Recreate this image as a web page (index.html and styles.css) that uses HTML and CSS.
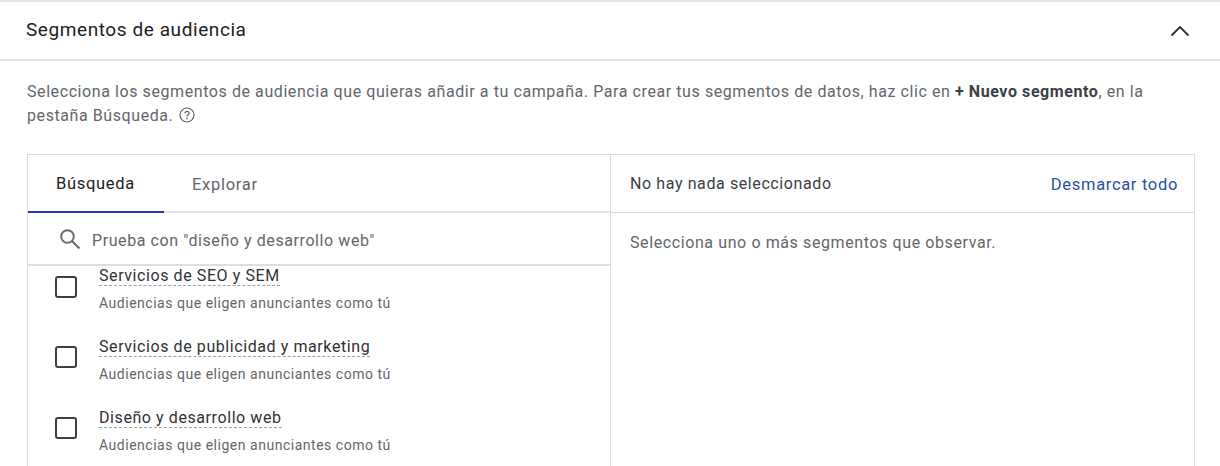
FILE: index.html
```html
<!DOCTYPE html>
<html lang="es">
<head>
  <meta charset="UTF-8" />
  <title>Segmentos de audiencia</title>
  <link rel="stylesheet" href="styles.css">
</head>
<body>
  <section class="panel">
    <header class="panel-head">
      <h2>Segmentos de audiencia</h2>
      <svg class="chevron" width="20" height="12" viewBox="0 0 20 12"><path d="M1.5 10.5 10 2l8.5 8.5" fill="none" stroke="#2b2d30" stroke-width="1.8"/></svg>
    </header>

    <p class="intro">Selecciona los segmentos de audiencia que quieras añadir a tu campaña. Para crear tus segmentos de datos, haz clic en <b>+ Nuevo segmento</b>, en la pestaña Búsqueda.
      <svg class="help" width="16" height="16" viewBox="0 0 16 16"><circle cx="8" cy="8" r="7" fill="none" stroke="#5f6368" stroke-width="1.2"/><path d="M5.9 6.3C5.9 5.1 6.8 4.3 8 4.3s2.1.8 2.1 1.9c0 1.5-2.1 1.6-2.1 3.2" fill="none" stroke="#5f6368" stroke-width="1.2"/><circle cx="8" cy="11.4" r=".8" fill="#5f6368"/></svg>
    </p>

    <div class="picker">
      <div class="col-left">
        <div class="tabs">
          <span class="tab active">Búsqueda</span>
          <span class="tab">Explorar</span>
        </div>
        <div class="search">
          <svg width="24" height="24" viewBox="0 0 24 24"><circle cx="9.5" cy="9.5" r="6.3" fill="none" stroke="#6b6f73" stroke-width="2"/><path d="m14 14 7.5 7.5" stroke="#6b6f73" stroke-width="2.2" fill="none"/></svg>
          <span>Prueba con "diseño y desarrollo web"</span>
        </div>
        <ul class="results">
          <li>
            <span class="check"></span>
            <div><span class="name">Servicios de SEO y SEM</span><small>Audiencias que eligen anunciantes como tú</small></div>
          </li>
          <li>
            <span class="check"></span>
            <div><span class="name">Servicios de publicidad y marketing</span><small>Audiencias que eligen anunciantes como tú</small></div>
          </li>
          <li>
            <span class="check"></span>
            <div><span class="name">Diseño y desarrollo web</span><small>Audiencias que eligen anunciantes como tú</small></div>
          </li>
        </ul>
      </div>
      <div class="col-right">
        <div class="selected-head">
          <span>No hay nada seleccionado</span>
          <a href="#">Desmarcar todo</a>
        </div>
        <p class="empty">Selecciona uno o más segmentos que observar.</p>
      </div>
    </div>
  </section>
</body>
</html>
```

FILE: styles.css
```css
*{box-sizing:border-box;margin:0;padding:0}
html,body{height:466px;overflow:hidden}
body{background:#fff;font-family:Roboto,Arial,sans-serif;color:#63666a}

.panel{border-top:2px solid #e3e4e6}
.panel-head{
  height:59px;
  padding:0 30px 2px 26px;
  display:flex;
  align-items:center;
  justify-content:space-between;
  border-bottom:2px solid #e3e4e6;
}
.chevron{margin-top:2px}
h2{font-size:19px;font-weight:400;color:#202124;letter-spacing:.58px}

.intro{
  padding:19px 26px 0 27px;
  font-size:16px;
  line-height:24px;
  letter-spacing:.58px;
  height:93px;
}
.intro b{font-weight:700;color:#3c4043}
.help{vertical-align:-2px;margin-left:1px}

.picker{
  margin:0 25px 0 27px;
  height:330px;
  border:1px solid #d9dadc;
  display:flex;
}
.col-left{width:583px;border-right:1px solid #d9dadc}
.col-right{flex:1}

.tabs{height:58px;display:flex;border-bottom:2px solid #e3e4e6}
.tab{
  height:58px;
  padding:0 28px;
  display:flex;
  align-items:center;
  font-size:16.5px;
  letter-spacing:.7px;
}
.tab.active{color:#202124;border-bottom:2px solid #1a3fb0;width:136px}

.search{
  height:53px;
  display:flex;
  align-items:center;
  gap:10px;
  padding:0 0 0 30px;
  font-size:16px;
  letter-spacing:.58px;
  border-bottom:2px solid #dcdde0;
}
.search span{padding-top:4px}
.results{list-style:none;height:200px;overflow:hidden}
.results li{
  height:71px;
  display:flex;
  align-items:flex-start;
  gap:22px;
  padding-left:27px;
}
.check{
  width:22px;
  height:22px;
  margin-top:9px;
  border:2px solid #3c4043;
  border-radius:3px;
  flex:none;
}
.results li:first-child .check{margin-top:10px}
.name{
  display:block;
  width:max-content;
  font-size:16px;
  line-height:19px;
  letter-spacing:.58px;
  color:#303134;
  border-bottom:1px dashed #9aa0a6;
}
small{display:block;margin-top:9px;font-size:14px;letter-spacing:.52px;line-height:16px}

.selected-head{
  height:58px;
  display:flex;
  align-items:center;
  justify-content:space-between;
  padding:0 16px 0 19px;
  font-size:16px;
  letter-spacing:.6px;
  color:#3c4043;
  border-bottom:1px solid #d9dadc;
}
a{color:#2a4fa3;text-decoration:none;font-size:16.5px;letter-spacing:.68px;padding-top:1px}
.empty{padding:20px 19px;font-size:16px;letter-spacing:.6px;line-height:20px}
```
